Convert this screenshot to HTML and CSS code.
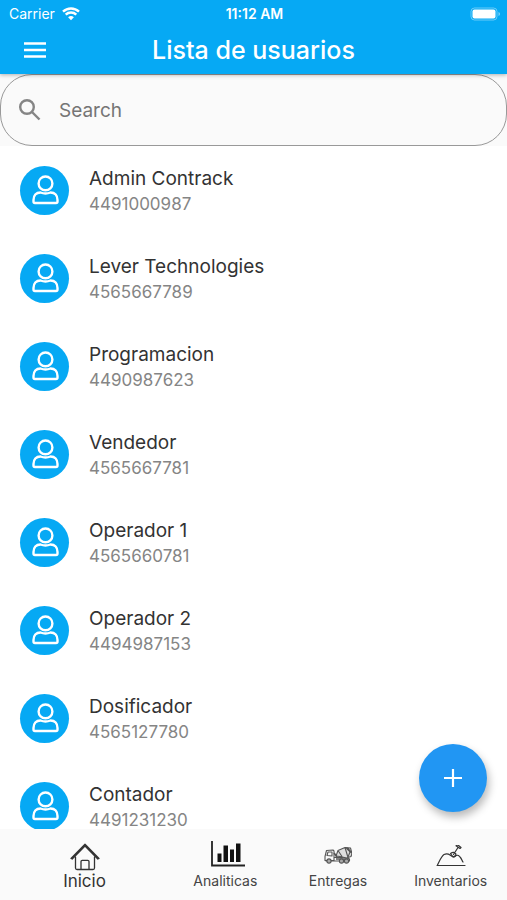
FILE: index.html
```html
<!DOCTYPE html>
<html lang="es">
<head>
<meta charset="utf-8">
<meta name="viewport" content="width=device-width, initial-scale=1">
<title>Lista de usuarios</title>
<link rel="stylesheet" href="styles.css">
</head>
<body>
<svg class="defs" aria-hidden="true">
  <symbol id="user" viewBox="0 0 28 32">
    <circle cx="14.500" cy="9.400" r="6.900"/>
    <path d="M9.500 18.500C5 18.500 2.500 21.500 2.500 26v1.500q0 1.500 1.500 1.500h21q1.500 0 1.500-1.500V26c0-4.500-2.500-7.500-7-7.500q-5 2-10 0z"/>
  </symbol>
</svg>
<div class="app">
  <header class="header">
    <div class="status">
      <div class="carrier">Carrier
        <svg width="18" height="14" viewBox="0 0 18 14" aria-hidden="true">
          <path d="M1 4.700a11.500 11.500 0 0 1 16 0M3.700 7.700a7.600 7.600 0 0 1 10.600 0" fill="none" stroke="currentColor" stroke-width="2.400"/>
          <path d="M9 13.200 6.100 10.300a4.200 4.200 0 0 1 5.800 0z" fill="currentColor"/>
        </svg>
      </div>
      <div class="time">11:12 AM</div>
      <svg class="battery" width="30" height="14" viewBox="0 0 30 14" aria-hidden="true">
        <rect x="1" y="1" width="26" height="12" rx="3.500" fill="none" stroke="#fff" stroke-opacity=".4"/>
        <rect x="2.500" y="2.500" width="23" height="9" rx="2" fill="#fff"/>
        <path d="M28.500 5v4q1.500-.5 1.500-2t-1.500-2z" fill="#fff" fill-opacity=".5"/>
      </svg>
    </div>
    <div class="toolbar">
      <button class="menu" type="button" aria-label="Menú">
        <svg width="24" height="16" viewBox="0 0 24 16"><path d="M1 1.500h22M1 8h22M1 14.500h22" stroke="currentColor" stroke-width="2.400"/></svg>
      </button>
      <h1>Lista de usuarios</h1>
    </div>
  </header>

  <div class="search-area">
    <label class="search">
      <svg width="24" height="24" viewBox="0 0 24 24" aria-hidden="true">
        <circle cx="9" cy="9" r="6.800"/><path d="m14 14 7.500 7.500"/>
      </svg>
      <input type="search" placeholder="Search" aria-label="Search">
    </label>
  </div>

  <main class="content">
    <ul class="users">
      <li><span class="avatar"><svg><use href="#user"/></svg></span><div><h2>Admin Contrack</h2><p>4491000987</p></div></li>
      <li><span class="avatar"><svg><use href="#user"/></svg></span><div><h2>Lever Technologies</h2><p>4565667789</p></div></li>
      <li><span class="avatar"><svg><use href="#user"/></svg></span><div><h2>Programacion</h2><p>4490987623</p></div></li>
      <li><span class="avatar"><svg><use href="#user"/></svg></span><div><h2>Vendedor</h2><p>4565667781</p></div></li>
      <li><span class="avatar"><svg><use href="#user"/></svg></span><div><h2>Operador 1</h2><p>4565660781</p></div></li>
      <li><span class="avatar"><svg><use href="#user"/></svg></span><div><h2>Operador 2</h2><p>4494987153</p></div></li>
      <li><span class="avatar"><svg><use href="#user"/></svg></span><div><h2>Dosificador</h2><p>4565127780</p></div></li>
      <li><span class="avatar"><svg><use href="#user"/></svg></span><div><h2>Contador</h2><p>4491231230</p></div></li>
    </ul>
    <button class="fab" type="button" aria-label="Agregar usuario">
      <svg width="20" height="20" viewBox="0 0 20 20"><path d="M10 1v18M1 10h18" stroke="currentColor" stroke-width="2.200"/></svg>
    </button>
  </main>

  <nav class="tabs">
    <a class="tab active" href="#inicio" aria-current="page">
      <svg width="30" height="28" viewBox="0 0 30 28" fill="none" stroke="#333" stroke-width="1.300" stroke-linejoin="round" stroke-linecap="round">
        <path d="M1 15.500 15 1.200l14 14.300-1.200.5L15 3 2.200 16z"/>
        <path d="M5.500 14v11q0 1.500 1.500 1.500h16q1.500 0 1.500-1.500V14M11 26v-7.500q0-1.200 1.200-1.200h5.600q1.200 0 1.200 1.200V26"/>
      </svg>
      Inicio
    </a>
    <a class="tab" href="#analiticas">
      <svg width="40" height="26" viewBox="-6 0 40 26">
        <path d="M1 0v24.500h33" fill="none" stroke="#222" stroke-width="1.800"/>
        <path d="M6.500 12.500h4V21h-4zM12.500 4.500h4.500V21h-4.500zM19 8.500h4V21h-4zM25 2.500h4.500V21H25z" fill="#111"/>
      </svg>
      Analiticas
    </a>
    <a class="tab" href="#entregas">
      <svg class="truck" width="28" height="20" viewBox="0 0 28 20" fill="none" stroke="#555" stroke-width="1.100" stroke-linejoin="round">
        <path d="M1 13.500V9.500L2.500 3.500 9 3l1 1v9.500zM3 8.500l1-3.500h4v4zM10 10.500h13l2.500 1.500v2H1.500"/>
        <path d="m12 9 2-5.500 7-3 5.500.5L28 6.500l-1 3-4.500 1.500L16 9.500zM14 3.500l4 6M21 .5l3 10M24 1l2 4-2 5" fill="#ddd"/>
        <path d="m10 6 3 4M22.500 1l5.500 5M12 12h12" stroke-width="1.700"/>
        <g fill="#aaa"><circle cx="5" cy="14" r="2.100"/><circle cx="17.500" cy="14" r="2.100"/><circle cx="22.500" cy="14" r="2.100"/></g>
      </svg>
      Entregas
    </a>
    <a class="tab" href="#inventarios">
      <svg width="30" height="22" viewBox="0 0 30 22" fill="none" stroke="#333" stroke-width="1.200" stroke-linecap="round" stroke-linejoin="round">
        <path d="M1 20.500h28M1.500 20C4 15 5.500 11 8 9.500c2.500-1 4.500-.5 6 .5 2 1.500 3.500 2.500 5 1.500 2-2 3.500-1.500 5 .5 1.500 1.500 2 3.500 3 5"/>
        <path d="m17.500 9.500 4.500-7M14.500 8.500q3.500-2.500 5.500.5-1 3-3 3zM20 .8l4 2.700 1-1-3-2.500z"/>
      </svg>
      Inventarios
    </a>
  </nav>
</div>
</body>
</html>
```

FILE: styles.css
```css
* {
  box-sizing: border-box;
}

body {
  margin: 0;
  font-family: Inter, "Liberation Sans", sans-serif;
  color: #333;
  background: #fff;
}

h1, h2, p, ul {
  margin: 0;
  padding: 0;
}

button {
  padding: 0;
  border: 0;
  color: #fff;
  cursor: pointer;
}

svg {
  display: block;
}

.defs {
  display: none;
}

.app {
  display: flex;
  flex-direction: column;
  height: 100vh;
}

.header {
  position: relative;
  z-index: 1;
  padding-bottom: 1px;
  color: #fff;
  background: #06a9f4;
  box-shadow: 0 1px 4px rgba(0, 0, 0, 0.3);
}

.status {
  display: grid;
  grid-template-columns: 1fr auto 1fr;
  align-items: center;
  height: 27px;
  padding: 0 7px 0 9px;
  font-size: 14px;
}

.carrier {
  display: flex;
  align-items: center;
  gap: 7px;
}

.time {
  font-weight: 600;
}

.battery {
  justify-self: end;
}

.toolbar {
  display: grid;
  grid-template-columns: 47px 1fr 47px;
  align-items: center;
  height: 46px;
}

.menu {
  justify-self: end;
  background: none;
}

h1 {
  font-size: 25px;
  font-weight: 500;
  line-height: 28px;
  text-align: center;
}

.search-area {
  background: #fafafa;
}

.search {
  display: flex;
  align-items: center;
  gap: 17px;
  height: 72px;
  padding: 0 17px;
  border: 1px solid #999;
  border-radius: 32px;
}

.search svg {
  fill: none;
  stroke: #858585;
  stroke-width: 2.4;
}

.search input {
  flex: 1;
  min-width: 0;
  padding: 0;
  border: 0;
  outline: 0;
  background: none;
  font: inherit;
  font-size: 19px;
}

.search input::placeholder {
  color: #757575;
  opacity: 1;
}

.content {
  position: relative;
  flex: 1;
  min-height: 0;
}

.users {
  height: 100%;
  overflow: hidden;
  list-style: none;
}

.users li {
  display: flex;
  align-items: center;
  gap: 20px;
  height: 88px;
  padding: 0 20px;
}

.avatar {
  display: grid;
  place-items: center;
  width: 49px;
  height: 49px;
  border-radius: 50%;
  background: #06a9f4;
}

.avatar svg {
  width: 28px;
  height: 32px;
  fill: none;
  stroke: #fff;
  stroke-width: 2.4;
}

h2 {
  padding-top: 2px;
  font-size: 19px;
  font-weight: 400;
  line-height: 26px;
}

.users p {
  font-size: 17px;
  line-height: 24px;
  color: #858585;
}

.fab {
  position: absolute;
  right: 20px;
  bottom: 17px;
  display: grid;
  place-items: center;
  width: 68px;
  height: 68px;
  border-radius: 50%;
  background: #2196f3;
  box-shadow: 2px 5px 9px rgba(0, 0, 0, 0.28);
}

.tabs {
  display: flex;
  height: 71px;
  background: #fafafa;
}

.tab {
  display: flex;
  flex: 2;
  flex-direction: column;
  align-items: center;
  justify-content: flex-end;
  gap: 4px;
  padding-bottom: 9px;
  font-size: 14px;
  line-height: 20px;
  color: #444;
  text-decoration: none;
}

.tab.active {
  flex: 3;
  gap: 0;
  font-size: 17px;
  color: #333;
}
```
